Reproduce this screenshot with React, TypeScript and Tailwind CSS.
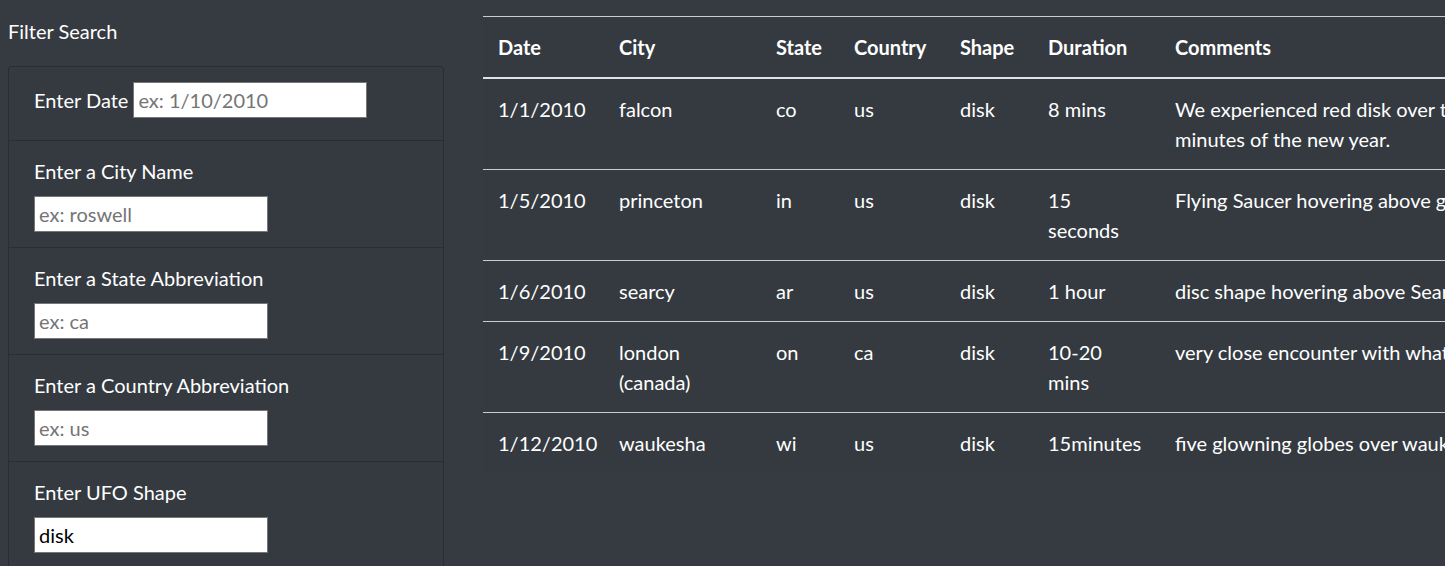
import React from "react";

type Sighting = {
  date: string;
  city: string[];
  state: string;
  country: string;
  shape: string;
  duration: string[];
  comments: string[];
};

const sightings: Sighting[] = [
  {
    date: "1/1/2010",
    city: ["falcon"],
    state: "co",
    country: "us",
    shape: "disk",
    duration: ["8 mins"],
    comments: ["We experienced red disk over the sky for the first 8", "minutes of the new year."],
  },
  {
    date: "1/5/2010",
    city: ["princeton"],
    state: "in",
    country: "us",
    shape: "disk",
    duration: ["15", "seconds"],
    comments: ["Flying Saucer hovering above grain elevator at night."],
  },
  {
    date: "1/6/2010",
    city: ["searcy"],
    state: "ar",
    country: "us",
    shape: "disk",
    duration: ["1 hour"],
    comments: ["disc shape hovering above Searcy with bright lights."],
  },
  {
    date: "1/9/2010",
    city: ["london", "(canada)"],
    state: "on",
    country: "ca",
    shape: "disk",
    duration: ["10-20", "mins"],
    comments: ["very close encounter with what seemed like a disk."],
  },
  {
    date: "1/12/2010",
    city: ["waukesha"],
    state: "wi",
    country: "us",
    shape: "disk",
    duration: ["15minutes"],
    comments: ["five glowning globes over waukesha in a line."],
  },
];

const filters = [
  { label: "Enter a City Name", placeholder: "ex: roswell", value: "" },
  { label: "Enter a State Abbreviation", placeholder: "ex: ca", value: "" },
  { label: "Enter a Country Abbreviation", placeholder: "ex: us", value: "" },
  { label: "Enter UFO Shape", placeholder: "ex: disk", value: "disk" },
];

const inputClass =
  "h-[36px] w-[234px] border border-[#767676] bg-white px-[4px] text-[20px] text-black placeholder:text-[#757575] outline-none";

function Lines({ lines }: { lines: string[] }) {
  return (
    <>
      {lines.map((line, i) => (
        <div key={i}>{line}</div>
      ))}
    </>
  );
}

export default function App() {
  return (
    <div
      className="h-[566px] w-[1445px] overflow-hidden bg-[#363b42] text-[20px] leading-[30px] text-white"
      style={{ fontFamily: "Lato, 'Noto Sans', sans-serif" }}
    >
      <div className="flex">
        <aside className="w-[436px] shrink-0 ml-[8px]">
          <h2 className="pt-[16px] pb-[20px] text-[20px] leading-[30px] font-normal">Filter Search</h2>
          <div className="rounded-[4px] border border-black/20 bg-[#343a40]">
            <div className="flex items-center pl-[25px] pt-[15px] pb-[22px]">
              <label className="mr-[5px]">Enter Date</label>
              <input className={inputClass} placeholder="ex: 1/10/2010" />
            </div>
            {filters.map((f) => (
              <div key={f.label} className="border-t border-black/20 pl-[25px] pt-[15px] pb-[15px]">
                <label className="mb-[10px] block">{f.label}</label>
                <input className={inputClass} placeholder={f.placeholder} defaultValue={f.value} />
              </div>
            ))}
          </div>
        </aside>

        <main className="ml-[39px] pt-[16px]">
          <table className="w-[1300px] table-fixed border-collapse bg-[#343a40] text-left">
            <colgroup>
              <col className="w-[121px]" />
              <col className="w-[157px]" />
              <col className="w-[78px]" />
              <col className="w-[106px]" />
              <col className="w-[88px]" />
              <col className="w-[127px]" />
              <col className="w-[623px]" />
            </colgroup>
            <thead>
              <tr className="border-t border-b-2 border-t-[#c9cdd1] border-b-[#dee2e6]">
                {["Date", "City", "State", "Country", "Shape", "Duration", "Comments"].map((h) => (
                  <th key={h} className="px-[15px] py-[15px] font-bold align-top">
                    {h}
                  </th>
                ))}
              </tr>
            </thead>
            <tbody>
              {sightings.map((s, i) => (
                <tr
                  key={s.date}
                  className={i < sightings.length - 1 ? "border-b border-[#c9cdd1]" : ""}
                >
                  <td className="p-[15px] align-top whitespace-nowrap">{s.date}</td>
                  <td className="p-[15px] align-top whitespace-nowrap">
                    <Lines lines={s.city} />
                  </td>
                  <td className="p-[15px] align-top">{s.state}</td>
                  <td className="p-[15px] align-top">{s.country}</td>
                  <td className="p-[15px] align-top">{s.shape}</td>
                  <td className="p-[15px] align-top whitespace-nowrap">
                    <Lines lines={s.duration} />
                  </td>
                  <td className="p-[15px] align-top whitespace-nowrap">
                    <Lines lines={s.comments} />
                  </td>
                </tr>
              ))}
            </tbody>
          </table>
        </main>
      </div>
    </div>
  );
}
